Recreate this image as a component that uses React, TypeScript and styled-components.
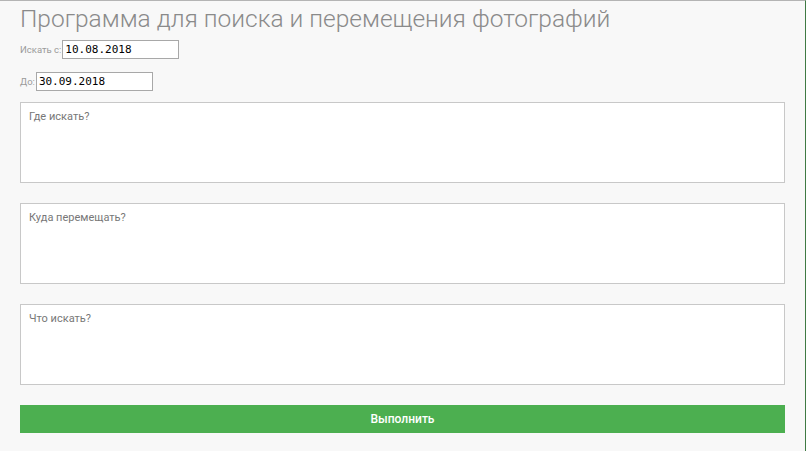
import React from "react";
import styled, { createGlobalStyle } from "styled-components";

const Global = createGlobalStyle`
  html, body { margin: 0; padding: 0; background: #f8f8f8; }
  body { font-family: Roboto, "Liberation Sans", sans-serif; }
`;

const Page = styled.div`
  box-sizing: border-box;
  width: 806px;
  height: 451px;
  border-top: 1px solid #b4b4b4;
  border-right: 1px solid #3f7a44;
  background: #f8f8f8;
  padding: 0 20px 0 20px;
  display: flex;
  flex-direction: column;
  overflow: hidden;
`;

const Title = styled.h1`
  margin: 3px 0 0 0;
  font-weight: 300;
  font-size: 24.5px;
  line-height: 30px;
  color: #8a8a8a;
`;

const Field = styled.label<{ $mt: number }>`
  display: flex;
  align-items: center;
  margin-top: ${(p) => p.$mt}px;
  font-size: 9.5px;
  color: #9a9a9a;
  height: 19px;
`;

const DateInput = styled.input`
  box-sizing: border-box;
  width: 117px;
  height: 19px;
  margin-left: 1px;
  border: 1px solid #a8a8a8;
  background: #fff;
  padding: 0 2px;
  font-family: "DejaVu Sans Mono", "Liberation Mono", monospace;
  font-size: 11px;
  color: #000;
  outline: none;
`;

const Area = styled.textarea<{ $mt: number }>`
  box-sizing: border-box;
  display: block;
  width: 765px;
  height: 81px;
  margin-top: ${(p) => p.$mt}px;
  border: 1px solid #c8c8c8;
  background: #fff;
  padding: 7px 8px;
  resize: none;
  font-family: Roboto, "Liberation Sans", sans-serif;
  font-size: 11px;
  outline: none;
  &::placeholder { color: #777; }
`;

const Button = styled.button`
  box-sizing: border-box;
  width: 765px;
  height: 28px;
  margin-top: 20px;
  border: none;
  background: #4caf50;
  color: #fff;
  font-family: Roboto, "Liberation Sans", sans-serif;
  font-weight: 500;
  font-size: 12px;
  cursor: pointer;
`;

export default function App() {
  return (
    <>
      <Global />
      <Page>
        <Title>Программа для поиска и перемещения фотографий</Title>
        <Field $mt={6}>
          Искать с:
          <DateInput defaultValue="10.08.2018" />
        </Field>
        <Field $mt={13}>
          До:
          <DateInput defaultValue="30.09.2018" />
        </Field>
        <Area $mt={11} placeholder="Где искать?" />
        <Area $mt={20} placeholder="Куда перемещать?" />
        <Area $mt={20} placeholder="Что искать?" />
        <Button>Выполнить</Button>
      </Page>
    </>
  );
}
